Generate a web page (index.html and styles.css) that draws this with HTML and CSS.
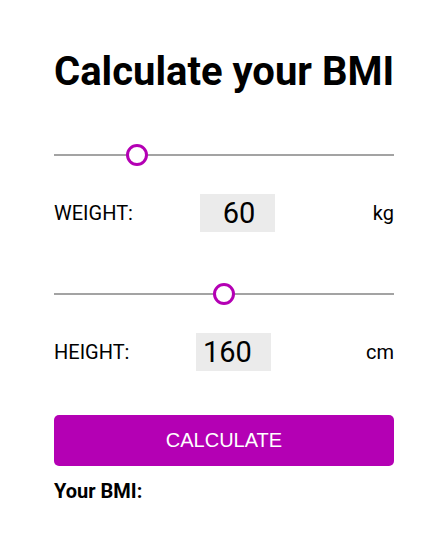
FILE: index.html
```html
<!DOCTYPE html>
<html>
<head>
<meta charset="utf-8">
<link rel="stylesheet" href="styles.css">
</head>
<body>
<main class="app">
  <h1 class="title">Calculate your BMI</h1>

  <div class="slider">
    <div class="track"></div>
    <div class="thumb" style="left: 83px"></div>
  </div>
  <div class="row">
    <span class="label">WEIGHT:</span>
    <span class="value value-weight">60</span>
    <span class="unit">kg</span>
  </div>

  <div class="slider">
    <div class="track"></div>
    <div class="thumb" style="left: 170px"></div>
  </div>
  <div class="row">
    <span class="label">HEIGHT:</span>
    <span class="value value-height">160</span>
    <span class="unit">cm</span>
  </div>

  <button class="calc">CALCULATE</button>
  <p class="result">Your BMI:</p>
</main>
</body>
</html>
```
FILE: styles.css
```css
html, body {
  margin: 0;
  padding: 0;
  background: #ffffff;
}
body {
  font-family: Roboto, "Noto Sans", sans-serif;
  color: #000;
}
.app {
  width: 340px;
  margin-left: 54px;
  padding-top: 47px;
}
.title {
  margin: 0;
  font-size: 40px;
  font-weight: 700;
  line-height: 50px;
  white-space: nowrap;
}
.slider {
  position: relative;
  height: 24px;
  margin-top: 46px;
}
.slider + .row { margin-top: 27px; }
.row + .slider { margin-top: 50px; }
.track {
  position: absolute;
  left: 0;
  right: 0;
  top: 11px;
  height: 2px;
  background: #a3a3a3;
}
.thumb {
  position: absolute;
  top: 1px;
  width: 22px;
  height: 22px;
  margin-left: -11px;
  box-sizing: border-box;
  border: 3px solid #b400b4;
  border-radius: 50%;
  background: #fff;
}
.row {
  display: flex;
  align-items: center;
  height: 38px;
}
.label {
  font-size: 20px;
  width: 146px;
}
.value {
  box-sizing: border-box;
  width: 75px;
  height: 38px;
  line-height: 38px;
  background: #ebebeb;
  font-size: 29px;
}
.value-weight {
  text-align: center;
  padding-left: 3px;
}
.value-height {
  margin-left: -4px;
  padding-left: 7px;
}
.unit {
  margin-left: auto;
  font-size: 20px;
}
.calc {
  display: block;
  width: 340px;
  height: 51px;
  margin-top: 44px;
  border: none;
  border-radius: 5px;
  background: #b400b4;
  color: #fff;
  font-family: "Liberation Sans", Arial, sans-serif;
  font-size: 20px;
  padding: 0;
}
.result {
  margin: 12px 0 0;
  font-size: 20px;
  font-weight: 700;
  line-height: 26px;
}
```
